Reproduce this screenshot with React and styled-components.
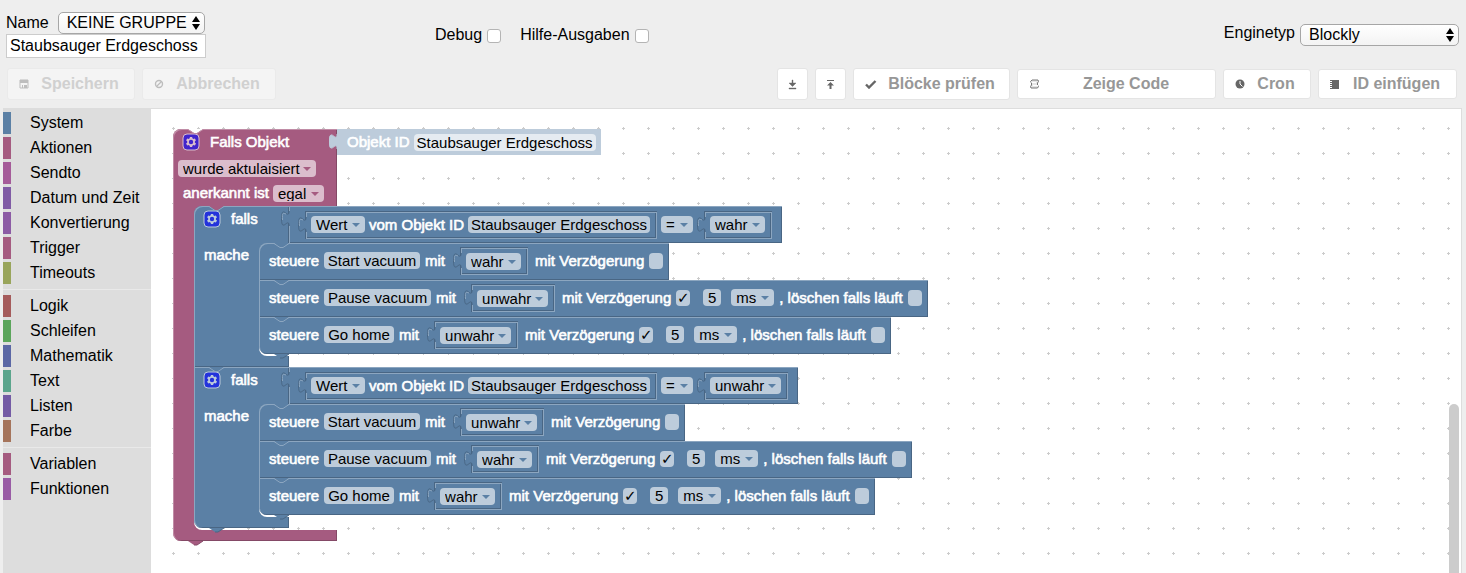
import React from 'react';
import styled, { createGlobalStyle } from 'styled-components';

const GlobalStyle = createGlobalStyle`
    * {
        box-sizing: border-box;
    }

    body {
        margin: 0;
        background: #eee;
        color: #000;
        font-family: "Liberation Sans", Arial, sans-serif;
        font-size: 16px;
    }

    input, select, button {
        font-family: inherit;
        font-size: inherit;
        color: inherit;
    }
`;

const BLUE = { base: '#5b80a5', light: '#8ca6c0', dark: '#496684', field: '#bdccdb' };
const PINK = { base: '#a55b80', light: '#c08ca6', dark: '#844966', field: '#dbbdcc' };
const PALE = { base: '#bdccdb', light: '#bdccdb', dark: '#bdccdb', field: '#e5ebf1' };

/* page frame */

const Page = styled.div`
    display: flex;
    flex-direction: column;
    min-height: 100vh;
`;

const TopBar = styled.header`
    display: grid;
    grid-template-columns: 428px 1fr auto;
    height: 68px;
    padding: 0 7px;
`;

const NameBox = styled.div`
    padding-top: 12px;
    margin-left: -1px;
`;

const NameRow = styled.label`
    display: flex;
    align-items: center;
    gap: 9px;
`;

const NameInput = styled.input`
    display: block;
    width: 200px;
    height: 24px;
    padding: 0 3px;
    border: 1px solid #ccc;
    background: #fff;
`;

const Options = styled.div`
    display: flex;
    align-items: flex-start;
    gap: 19px;
    padding-top: 25px;
`;

const CheckLabel = styled.label`
    display: flex;
    align-items: center;
    gap: 5px;
    line-height: 20px;
`;

const CheckBox = styled.input`
    appearance: none;
    width: 14px;
    height: 14px;
    margin: 2px 0 0;
    border: 1px solid #b4b4b4;
    border-radius: 3px;
    background: #fff;
`;

const EngineRow = styled.label`
    display: flex;
    align-items: flex-start;
    gap: 5px;
    padding-top: 24px;
    line-height: 18px;
`;

const SelectHolder = styled.span`
    position: relative;
    display: block;

    svg {
        position: absolute;
        right: 4px;
        top: 4px;
        pointer-events: none;
    }
`;

const NativeSelect = styled.select`
    appearance: none;
    display: block;
    width: ${props => props.$width};
    height: 22px;
    padding: 0 8px 2px;
    border: 1px solid #a6a6a6;
    border-radius: 5px;
    background: linear-gradient(#fff, #f3f3f3);
`;

const ToolBar = styled.div`
    display: flex;
    align-items: center;
    gap: 7px;
    height: 32px;
    margin-bottom: 8px;
    padding: 0 9px 0 7px;
`;

const Spacer = styled.div`
    flex: 1;
`;

const ToolButton = styled.button`
    display: flex;
    align-items: center;
    width: ${props => props.$width};
    height: ${props => props.$height || '32px'};
    padding: 0 ${props => (props.$square ? '9px' : '11px')};
    border: 1px solid #e4e4e4;
    border-radius: 3px;
    background: #fff;
    color: #979797;
    font-weight: bold;

    &:disabled {
        border-color: #eaeaea;
        background: #f4f4f4;
        color: #d0d0d0;
    }

    span {
        flex: 1;
        padding-left: 8px;
        text-align: center;
        white-space: nowrap;
    }

    svg {
        flex: none;
    }
`;

const Main = styled.main`
    flex: 1;
    display: flex;
    padding: 0 4px 0 3px;
`;

const Toolbox = styled.nav`
    width: 148px;
    padding-top: 4px;
    background: #ddd;
`;

const Category = styled.a`
    display: block;
    height: 22px;
    margin-bottom: 3px;
    padding-left: 19px;
    border-left: 8px solid ${props => props.$color};
    color: #000;
    line-height: 21px;
    text-decoration: none;
    white-space: nowrap;
`;

const Separator = styled.hr`
    height: 1px;
    margin: 5px 0;
    border: 0;
    background: #e9e9e9;
`;

const Canvas = styled.section`
    position: relative;
    flex: 1;
    padding: 20px 22px;
    border-top: 1px solid #ddd;
    border-right: 1px solid #ddd;
    background: #fff;
    overflow: hidden;
`;

const GridDots = styled.svg`
    position: absolute;
    left: 0;
    top: 0;
    width: 100%;
    height: 100%;
`;

const ScrollThumb = styled.div`
    position: absolute;
    right: 2px;
    top: 295px;
    bottom: 0;
    width: 10px;
    border-radius: 5px 5px 0 0;
    background: #ccc;
`;

/* blocks */

const Stack = styled.div`
    position: relative;
    display: flex;
    flex-direction: column;
    align-items: flex-start;
    font-size: 15px;
    line-height: 16px;
    white-space: nowrap;
`;

const Block = styled.div`
    position: relative;
`;

const Head = styled.div`
    display: flex;
    align-items: flex-start;
`;

const HeadFace = styled.div`
    width: ${props => props.$width};
    height: ${props => props.$height};
    border-top-left-radius: ${props => (props.$first ? '8px' : 0)};
    background: ${props => props.$tone.base};
    box-shadow: inset 1px 1px ${props => props.$tone.light}, inset -1px 0 ${props => props.$tone.dark};
`;

const HeadLine = styled.div`
    display: flex;
    align-items: center;
    gap: ${props => props.$gap || '5px'};
    height: ${props => props.$height || '26px'};
    padding-left: ${props => props.$indent || '10px'};
`;

const Body = styled.div`
    display: flex;
    background: linear-gradient(${props => props.$tone.base}, ${props => props.$tone.base})
        no-repeat 0 0 / ${props => props.$reach} 100%;
`;

const Spine = styled.div`
    flex: none;
    width: ${props => props.$width};
    padding: 4px 0 0 10px;
    box-shadow: inset 1px 0 ${props => props.$tone.light};
`;

const StatementSlot = styled.div`
    padding-bottom: 2px;
    border-bottom-left-radius: 8px;
    background: linear-gradient(#fff, #fff) no-repeat 0 100% / 30px 10px;
`;

const Foot = styled.div`
    width: ${props => props.$width};
    height: 11px;
    border-bottom-left-radius: ${props => (props.$last ? '8px' : 0)};
    background: ${props => props.$tone.base};
    box-shadow: inset 1px 0 ${props => props.$tone.light}, inset -1px -1px ${props => props.$tone.dark};
`;

const ValueBlock = styled.div`
    position: relative;
    display: flex;
    align-items: center;
    gap: ${props => props.$gap || '4px'};
    height: ${props => props.$height || '26px'};
    padding: ${props => props.$padding || '0 6px 0 5px'};
    background: ${props => props.$tone.base};
    box-shadow: inset 1px 1px ${props => props.$tone.light}, inset -1px -1px ${props => props.$tone.dark};
`;

const InputSlot = styled.div`
    flex: none;
    margin: ${props => props.$margin || 0};
    padding: 1px;
    box-shadow: inset 1px 1px ${BLUE.dark}, inset -1px -1px ${BLUE.light};
`;

const ControlRow = styled.div`
    display: flex;
    align-items: center;
    gap: 5px;
    height: 37px;
    padding: 0 6px 2px 10px;
    border-top-left-radius: ${props => (props.$first ? '8px' : 0)};
    border-bottom-left-radius: ${props => (props.$last ? '8px' : 0)};
    background: ${BLUE.base};
    box-shadow: inset 1px 1px ${BLUE.light}, inset -1px -1px ${BLUE.dark};
`;

const Caption = styled.span`
    color: #fff;
    -webkit-text-stroke: 0.04em #fff;
`;

const FieldLabel = styled.label`
    display: flex;
    align-items: center;
    gap: 5px;
    color: #fff;
    -webkit-text-stroke: 0.04em #fff;
`;

const TextField = styled.input`
    flex: none;
    width: ${props => props.$width};
    height: 17px;
    margin: ${props => props.$margin || 0};
    padding: 0;
    border: 0;
    border-radius: 4px;
    background: ${props => props.$tone.field};
    text-align: center;
`;

const BlockCheck = styled.input`
    appearance: none;
    flex: none;
    width: 14px;
    height: 16px;
    margin: 0;
    border-radius: 4px;
    background: ${BLUE.field};
    color: #000;
    font-family: "DejaVu Sans", sans-serif;
    font-weight: bold;
    line-height: 16px;
    text-align: center;
    -webkit-text-stroke: 0;

    &:checked::after {
        content: "\\2713";
    }
`;

const FieldSelectHolder = styled.span`
    position: relative;
    flex: none;
    margin: ${props => props.$margin || 0};

    select {
        appearance: none;
        display: block;
        width: ${props => props.$width};
        height: 17px;
        padding: 0 0 1px 5px;
        border: 0;
        border-radius: 4px;
        background: ${props => props.$tone.field};
    }

    &::after {
        content: "";
        position: absolute;
        right: 5px;
        top: 7px;
        border: 4px solid transparent;
        border-top: 4px solid ${props => props.$tone.base};
        border-bottom: 0;
        pointer-events: none;
    }
`;

const NotchSvg = styled.svg`
    position: absolute;
    left: 15px;
    top: ${props => props.$top};
    z-index: 1;
`;

const PlugSvg = styled.svg`
    position: absolute;
    left: -8px;
    top: 5px;
`;

const GearButton = styled.button`
    width: 16px;
    height: 16px;
    padding: 0;
    border: 0;
    background: none;

    svg {
        display: block;
        overflow: visible;
    }
`;

const Notch = ({ fill, stroke }) => (
    <NotchSvg $top="0" width="16" height="6">
        <path d="M0,0 L6,4 L9,4 L15,0 Z" fill={fill} />
        <path d="M0,0.5 L6,4.5 L9,4.5 L15,0.5" fill="none" stroke={stroke} />
    </NotchSvg>
);

const Tab = ({ tone }) => (
    <NotchSvg $top="100%" width="16" height="5">
        <path d="M0,0 L6,4 L9,4 L15,0 Z" fill={tone.base} />
        <path d="M6,4 L9,4 L15,0" fill="none" stroke={tone.dark} />
    </NotchSvg>
);

const Plug = ({ tone }) => (
    <PlugSvg width="9" height="17">
        <path d="M9,0 H8 C8,10 0,-8 0,7.5 S8,5 8,15 H9 Z" fill={tone.base} />
        <path d="M8,0 C8,10 0.5,-8 0.5,7.5 S8,5 8,15" fill="none" stroke={tone.dark} />
        <path d="M1.5,9 C1,1 2,2 5,3" fill="none" stroke={tone.light} />
    </PlugSvg>
);

const Gear = () => (
    <GearButton type="button" aria-label="Mutator">
        <svg width="16" height="16" opacity="0.6">
            <rect width="16" height="16" rx="4" fill="#00f" stroke="#fff" />
            <path
                fill="#fff"
                d="m4.203,7.296 0,1.368 -0.92,0.677 -0.11,0.41 0.9,1.559 0.41,0.11 1.043,-0.457 1.187,0.683 0.127,1.134 0.3,0.3 1.8,0 0.3,-0.299 0.127,-1.138 1.185,-0.682 1.046,0.458 0.409,-0.11 0.9,-1.559 -0.11,-0.41 -0.92,-0.677 0,-1.366 0.92,-0.677 0.11,-0.41 -0.9,-1.559 -0.409,-0.109 -1.046,0.458 -1.185,-0.682 -0.127,-1.138 -0.3,-0.299 -1.8,0 -0.3,0.3 -0.126,1.135 -1.187,0.682 -1.043,-0.457 -0.41,0.11 -0.899,1.559 0.108,0.409z"
            />
            <circle cx="8" cy="8" r="2.2" fill="#00f" />
        </svg>
    </GearButton>
);

const FieldSelect = ({ value, width, label, margin, tone = BLUE }) => (
    <FieldSelectHolder $width={width} $margin={margin} $tone={tone}>
        <select aria-label={label} defaultValue={value}>
            <option>{value}</option>
        </select>
    </FieldSelectHolder>
);

const BoolValue = ({ value }) => (
    <ValueBlock $tone={BLUE}>
        <Plug tone={BLUE} />
        <FieldSelect value={value} width={value === 'wahr' ? '55px' : '71px'} label="Wahrheitswert" />
    </ValueBlock>
);

/* C-shaped block: head, statement slot, foot */
const WrapBlock = ({ tone, width, headHeight, spine, reach, face, side, spineText, first, last, above, edge, children }) => (
    <Block>
        <Head>
            <HeadFace $tone={tone} $width={width} $height={headHeight} $first={first}>{face}</HeadFace>
            {side}
        </Head>
        <Body $tone={tone} $reach={reach}>
            <Spine $tone={tone} $width={spine}>{spineText}</Spine>
            <StatementSlot>{children}</StatementSlot>
        </Body>
        <Foot $tone={tone} $width={width} $last={last} />
        <Notch fill={above} stroke={edge} />
        {last && <Tab tone={tone} />}
    </Block>
);

const ControlBlock = ({ target, width, value, delay, first, last }) => (
    <Stack>
        <ControlRow $first={first} $last={last}>
            <Caption>steuere</Caption>
            <TextField $tone={BLUE} $width={width} defaultValue={target} aria-label="Objekt" />
            <Caption>mit</Caption>
            <InputSlot $margin="1px 2px 0 10px">
                <BoolValue value={value} />
            </InputSlot>
            <FieldLabel>
                mit Verzögerung
                <BlockCheck type="checkbox" defaultChecked={Boolean(delay)} />
            </FieldLabel>
            {delay && (
                <>
                    <TextField $tone={BLUE} $width="18px" $margin="0 0 0 8px" defaultValue={delay} aria-label="Verzögerung" />
                    <FieldSelect value="ms" width="43px" margin="0 0 0 5px" label="Einheit" />
                    <FieldLabel>
                        , löschen falls läuft
                        <BlockCheck type="checkbox" />
                    </FieldLabel>
                </>
            )}
        </ControlRow>
        <Notch fill={BLUE.base} stroke={BLUE.light} />
        {last && <Tab tone={BLUE} />}
    </Stack>
);

const IfBlock = ({ compareTo, steps, first, last, above }) => (
    <WrapBlock
        tone={BLUE}
        width="95px"
        headHeight="37px"
        spine="65px"
        reach="73px"
        first={first}
        last={last}
        above={above}
        edge={BLUE.light}
        face={
            <HeadLine $gap="11px">
                <Gear />
                <Caption>falls</Caption>
            </HeadLine>
        }
        side={
            <ValueBlock $tone={BLUE} $height="37px" $padding="0 10px 0 16px">
                <Plug tone={BLUE} />
                <InputSlot>
                    <ValueBlock $tone={BLUE}>
                        <Plug tone={BLUE} />
                        <FieldSelect value="Wert" width="54px" label="Attribut" />
                        <Caption>vom Objekt ID</Caption>
                        <TextField $tone={BLUE} $width="182px" defaultValue="Staubsauger Erdgeschoss" aria-label="Objekt ID" />
                    </ValueBlock>
                </InputSlot>
                <FieldSelect value="=" width="32px" label="Vergleich" />
                <InputSlot $margin="0 0 0 7px">
                    <BoolValue value={compareTo} />
                </InputSlot>
            </ValueBlock>
        }
        spineText={<Caption>mache</Caption>}
    >
        {steps.map((step, i) => (
            <ControlBlock key={step.target} {...step} first={i === 0} last={i === steps.length - 1} />
        ))}
    </WrapBlock>
);

const UpDown = () => (
    <svg width="10" height="14">
        <path d="M5,0 L9,6 H1 Z M5,14 L9,8 H1 Z" fill="#000" />
    </svg>
);

const SaveIcon = () => (
    <svg width="10" height="10">
        <path d="M1,1 H9 V9 H1 Z" fill="none" stroke="#bdbdbd" />
        <path d="M1,1 H9 V4 H1 Z M3,6 H4 V9 H3 Z M5,6 H8 V9 H5 Z" fill="#bdbdbd" />
    </svg>
);

const CancelIcon = () => (
    <svg width="10" height="10">
        <circle cx="5" cy="5" r="3.5" fill="none" stroke="#bdbdbd" strokeWidth="1.4" />
        <path d="M2.5,7.5 L7.5,2.5" stroke="#bdbdbd" strokeWidth="1.2" />
    </svg>
);

const DownIcon = () => (
    <svg width="11" height="11">
        <path d="M5,1 H6 V4 H9 L5.5,7.5 L2,4 H5 Z M2,9 H9 V10 H2 Z" fill="#666" stroke="#666" strokeWidth="0.4" />
    </svg>
);

const UpIcon = () => (
    <svg width="11" height="11">
        <path d="M2,1 H9 V2 H2 Z M5.5,3 L9,6.5 H6.5 V10 H4.5 V6.5 H2 Z" fill="#666" />
    </svg>
);

const CheckIcon = () => (
    <svg width="12" height="10">
        <path d="M1,5.5 L4,8.5 L10.5,2" fill="none" stroke="#666" strokeWidth="2.4" />
    </svg>
);

const ScriptIcon = () => (
    <svg width="11" height="10">
        <path d="M3,1 H9 L9.5,2.5 L8.5,4 V6 L9.5,7.5 L8.5,9 H2 L1.5,7.5 L2.5,6 V4 L1.5,2.5 Z" fill="#e6e6e6" stroke="#777" />
        <path d="M2.5,3.5 H7 M4,6.5 H9" fill="none" stroke="#fff" />
    </svg>
);

const ClockIcon = () => (
    <svg width="10" height="10">
        <circle cx="5" cy="5" r="4.5" fill="#666" />
        <path d="M5,2 V5 L7.5,7.5" fill="none" stroke="#fff" />
    </svg>
);

const NoteIcon = () => (
    <svg width="10" height="11">
        <path d="M3,1 H9 V10 H3 Z M0,1 H2 V2 H0 Z M0,3 H2 V4 H0 Z M0,5 H2 V6 H0 Z M0,7 H2 V8 H0 Z M0,9 H2 V10 H0 Z M2,1 H3 V10 H2 Z" fill="#666" />
    </svg>
);

const categories = [
    [
        ['System', '#5b80a5'],
        ['Aktionen', '#a55b80'],
        ['Sendto', '#a55b99'],
        ['Datum und Zeit', '#805ba5'],
        ['Konvertierung', '#8c5ba5'],
        ['Trigger', '#a55b80'],
        ['Timeouts', '#99a55b'],
    ],
    [
        ['Logik', '#a55b5b'],
        ['Schleifen', '#5ba55b'],
        ['Mathematik', '#5b67a5'],
        ['Text', '#5ba58c'],
        ['Listen', '#745ba5'],
        ['Farbe', '#a5745b'],
    ],
    [
        ['Variablen', '#a55b80'],
        ['Funktionen', '#995ba5'],
    ],
];

const startSteps = [
    { target: 'Start vacuum', width: '96px', value: 'wahr' },
    { target: 'Pause vacuum', width: '107px', value: 'unwahr', delay: '5' },
    { target: 'Go home', width: '70px', value: 'unwahr', delay: '5' },
];

const stopSteps = [
    { target: 'Start vacuum', width: '96px', value: 'unwahr' },
    { target: 'Pause vacuum', width: '107px', value: 'wahr', delay: '5' },
    { target: 'Go home', width: '70px', value: 'wahr', delay: '5' },
];

const App = () => (
    <Page>
        <GlobalStyle />
        <TopBar>
            <NameBox>
                <NameRow>
                    Name
                    <SelectHolder>
                        <NativeSelect $width="147px" defaultValue="KEINE GRUPPE">
                            <option>KEINE GRUPPE</option>
                        </NativeSelect>
                        <UpDown />
                    </SelectHolder>
                </NameRow>
                <NameInput defaultValue="Staubsauger Erdgeschoss" aria-label="Name" />
            </NameBox>
            <Options>
                <CheckLabel>Debug<CheckBox type="checkbox" /></CheckLabel>
                <CheckLabel>Hilfe-Ausgaben<CheckBox type="checkbox" /></CheckLabel>
            </Options>
            <EngineRow>
                Enginetyp
                <SelectHolder>
                    <NativeSelect $width="159px" defaultValue="Blockly">
                        <option>Blockly</option>
                    </NativeSelect>
                    <UpDown />
                </SelectHolder>
            </EngineRow>
        </TopBar>

        <ToolBar>
            <ToolButton $width="128px" disabled><SaveIcon /><span>Speichern</span></ToolButton>
            <ToolButton $width="134px" disabled><CancelIcon /><span>Abbrechen</span></ToolButton>
            <Spacer />
            <ToolButton $width="31px" $square aria-label="Import"><DownIcon /></ToolButton>
            <ToolButton $width="31px" $square aria-label="Export"><UpIcon /></ToolButton>
            <ToolButton $width="157px"><CheckIcon /><span>Blöcke prüfen</span></ToolButton>
            <ToolButton $width="199px" $height="30px"><ScriptIcon /><span>Zeige Code</span></ToolButton>
            <ToolButton $width="88px" $height="30px"><ClockIcon /><span>Cron</span></ToolButton>
            <ToolButton $width="139px" $height="30px"><NoteIcon /><span>ID einfügen</span></ToolButton>
        </ToolBar>

        <Main>
            <Toolbox>
                {categories.map((group, i) => (
                    <React.Fragment key={i}>
                        {i > 0 && <Separator />}
                        {group.map(([name, color]) => (
                            <Category key={name} href={`#${name}`} $color={color}>{name}</Category>
                        ))}
                    </React.Fragment>
                ))}
            </Toolbox>
            <Canvas>
                <GridDots>
                    <defs>
                        <pattern id="dots" x="21" y="18" width="25" height="25" patternUnits="userSpaceOnUse">
                            <path d="M0,1 H3 V2 H0 Z M1,0 H2 V3 H1 Z" fill="#ccc" />
                        </pattern>
                    </defs>
                    <rect width="100%" height="100%" fill="url(#dots)" />
                </GridDots>
                <Stack>
                    <WrapBlock
                        tone={PINK}
                        width="164px"
                        headHeight="77px"
                        spine="21px"
                        reach="29px"
                        first
                        last
                        above="#fff"
                        edge={PINK.light}
                        face={
                            <>
                                <HeadLine $gap="11px"><Gear /><Caption>Falls Objekt</Caption></HeadLine>
                                <HeadLine $indent="5px">
                                    <FieldSelect tone={PINK} value="wurde aktulaisiert" width="138px" label="Bedingung" />
                                </HeadLine>
                                <HeadLine $height="24px" $gap="4px">
                                    <Caption>anerkannt ist</Caption>
                                    <FieldSelect tone={PINK} value="egal" width="51px" label="Anerkannt" />
                                </HeadLine>
                            </>
                        }
                        side={
                            <ValueBlock $tone={PALE} $padding="0 5px 0 10px">
                                <Plug tone={PALE} />
                                <Caption>Objekt ID</Caption>
                                <TextField $tone={PALE} $width="182px" defaultValue="Staubsauger Erdgeschoss" aria-label="Objekt ID" />
                            </ValueBlock>
                        }
                    >
                        <IfBlock compareTo="wahr" steps={startSteps} above={PINK.base} first />
                        <IfBlock compareTo="unwahr" steps={stopSteps} above={BLUE.base} last />
                    </WrapBlock>
                </Stack>
                <ScrollThumb />
            </Canvas>
        </Main>
    </Page>
);

export default App;
